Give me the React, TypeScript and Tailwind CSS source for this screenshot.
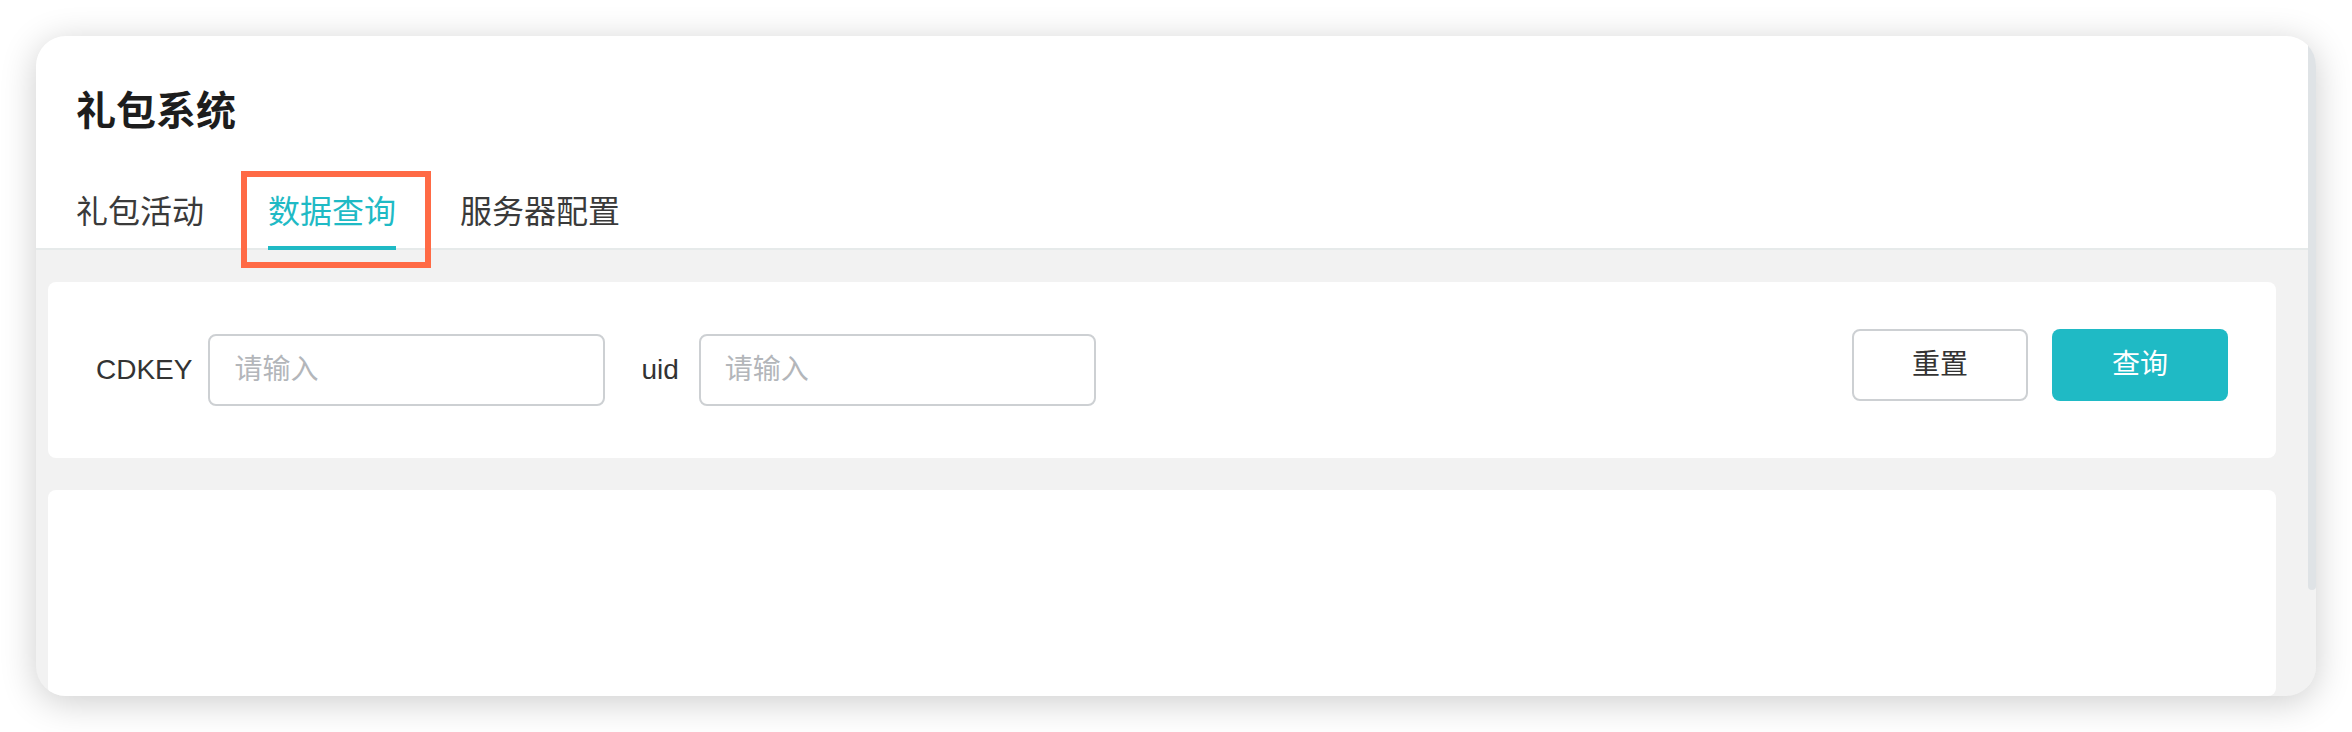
import React, { useState } from 'react';

const tabs = ['礼包活动', '数据查询', '服务器配置'];

function App() {
  const [active, setActive] = useState(1);
  const [cdkey, setCdkey] = useState('');
  const [uid, setUid] = useState('');

  return (
    <div
      className="w-[2352px] h-[732px] bg-white p-[36px]"
      style={{ fontFamily: '"Liberation Sans", "Noto Sans CJK SC", sans-serif' }}
    >
      <div className="flex h-[660px] overflow-hidden rounded-[30px] bg-[#f2f2f2] shadow-[0_6px_36px_rgba(0,0,0,0.2)]">
        <div className="flex flex-1 flex-col">
          {/* header */}
          <div className="bg-white pt-[47px] px-[40px] border-b-2 border-[#e6eaea]">
            <h1 className="h-[56px] text-[40px] leading-[56px] font-bold text-[#1d1d1d]">礼包系统</h1>
            <div className="mt-[51px] -mb-[2px] flex gap-[64px]">
              {tabs.map((t, i) => (
                <div key={t} className="relative">
                  <button
                    className={
                      'pb-[12px] text-[32px] leading-[44px] border-b-4 ' +
                      (i === active ? 'text-[#1fbac5] border-[#1fbac5]' : 'text-[#3a3a3a] border-transparent')
                    }
                    onClick={() => setActive(i)}
                  >
                    {t}
                  </button>
                  {i === 1 && (
                    <div className="absolute -left-[27px] -right-[35px] -top-[19px] -bottom-[18px] border-[6px] border-[#ff6a45] pointer-events-none" />
                  )}
                </div>
              ))}
            </div>
          </div>

          {/* content */}
          <div className="flex flex-1 flex-col pl-[12px] pr-[32px] pt-[32px]">
            <div className="flex h-[176px] items-center rounded-[8px] bg-white px-[48px]">
              <label className="mr-[16px] text-[28px] text-[#333]">CDKEY</label>
              <input
                className="h-[72px] w-[397px] rounded-[8px] border-2 border-[#cdd0d3] px-[24px] text-[28px] text-[#333] outline-none placeholder:text-[#b3b6ba]"
                placeholder="请输入"
                value={cdkey}
                onChange={(e) => setCdkey(e.target.value)}
              />
              <label className="ml-[36px] mr-[20px] text-[28px] text-[#333]">uid</label>
              <input
                className="h-[72px] w-[397px] rounded-[8px] border-2 border-[#cdd0d3] px-[24px] text-[28px] text-[#333] outline-none placeholder:text-[#b3b6ba]"
                placeholder="请输入"
                value={uid}
                onChange={(e) => setUid(e.target.value)}
              />
              <div className="ml-auto mb-[10px] flex gap-[24px]">
                <button
                  className="h-[72px] w-[176px] rounded-[8px] border-2 border-[#cdd0d3] bg-white text-[28px] text-[#333]"
                  onClick={() => {
                    setCdkey('');
                    setUid('');
                  }}
                >
                  重置
                </button>
                <button className="h-[72px] w-[176px] rounded-[8px] bg-[#1fbac5] text-[28px] text-white">查询</button>
              </div>
            </div>
            <div className="mt-[32px] flex-1 rounded-[8px] bg-white" />
          </div>
        </div>

        {/* scrollbar */}
        <div className="w-[8px] bg-[#f2f2f2]">
          <div className="h-[554px] rounded-b-[4px] bg-[#dfe3e6]" />
        </div>
      </div>
    </div>
  );
}

export default App;
